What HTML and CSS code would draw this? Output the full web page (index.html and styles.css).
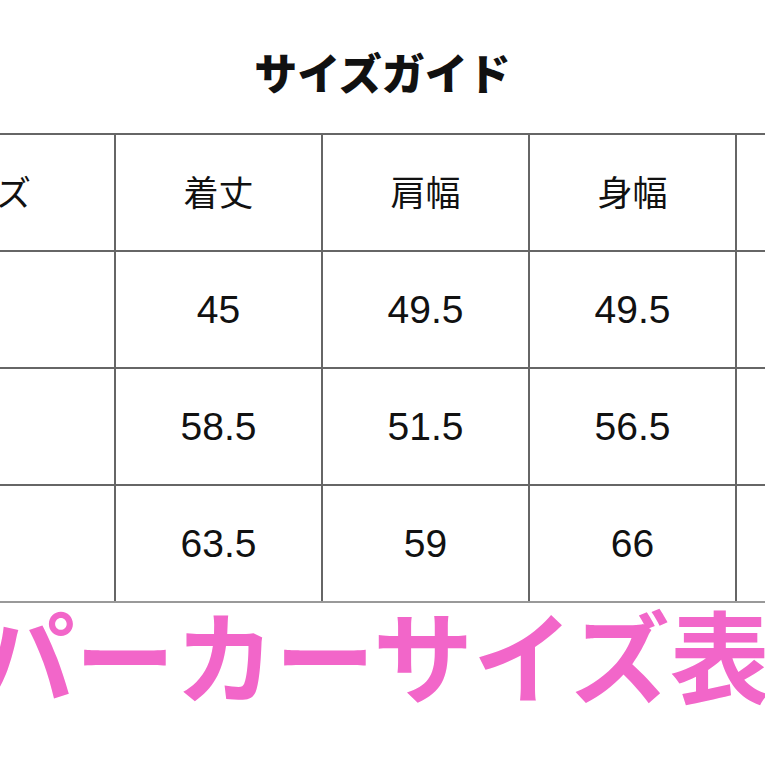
FILE: index.html
```html
<!DOCTYPE html>
<html lang="ja">
<head>
<meta charset="utf-8">
<link rel="stylesheet" href="styles.css">
</head>
<body>
<div class="page">
  <h1 class="title">サイズガイド</h1>
  <table class="size-table">
    <colgroup>
      <col class="col-first"><col class="col"><col class="col"><col class="col"><col class="col">
    </colgroup>
    <tr class="head"><td>サイズ</td><td>着丈</td><td>肩幅</td><td>身幅</td><td>袖丈</td></tr>
    <tr><td>S</td><td>45</td><td>49.5</td><td>49.5</td><td></td></tr>
    <tr><td>M</td><td>58.5</td><td>51.5</td><td>56.5</td><td></td></tr>
    <tr><td>L</td><td>63.5</td><td>59</td><td>66</td><td></td></tr>
  </table>
  <div class="caption">パーカーサイズ表</div>
</div>
</body>
</html>
```
FILE: styles.css
```css
html, body {
  margin: 0;
  padding: 0;
  background: #fff;
  overflow: hidden;
}
.page {
  width: 765px;
  height: 765px;
  overflow: hidden;
  font-family: "Liberation Sans", "Noto Sans CJK JP", sans-serif;
  color: #111;
}
.title {
  margin: 0;
  padding-top: 49px;
  height: 44px;
  line-height: 44px;
  font-size: 43px;
  font-weight: 900;
  text-align: center;
  font-family: "Noto Sans CJK JP", sans-serif;
  margin-bottom: 40px;
}
.size-table {
  border-collapse: collapse;
  table-layout: fixed;
  width: 1099px;
  margin-left: -158px;
  font-size: 39px;
}
.col-first { width: 272px; }
.col { width: 207px; }
.size-table td {
  border: 2px solid #666;
  height: 115px;
  padding: 0;
  text-align: center;
  vertical-align: middle;
}
.size-table .head td {
  font-family: "Noto Sans CJK JP", sans-serif;
  font-size: 35px;
  line-height: 40px;
  height: 111px;
  padding-bottom: 4px;
}
.size-table tr:last-child td {
  border-bottom-color: #999;
}
.caption {
  font-family: "Noto Sans CJK JP", sans-serif;
  font-weight: 700;
  font-size: 100px;
  line-height: 100px;
  height: 162px;
  white-space: nowrap;
  color: #f266c9;
  margin-left: -25px;
  border-bottom: 1px solid #e2e2e2;
}
```
